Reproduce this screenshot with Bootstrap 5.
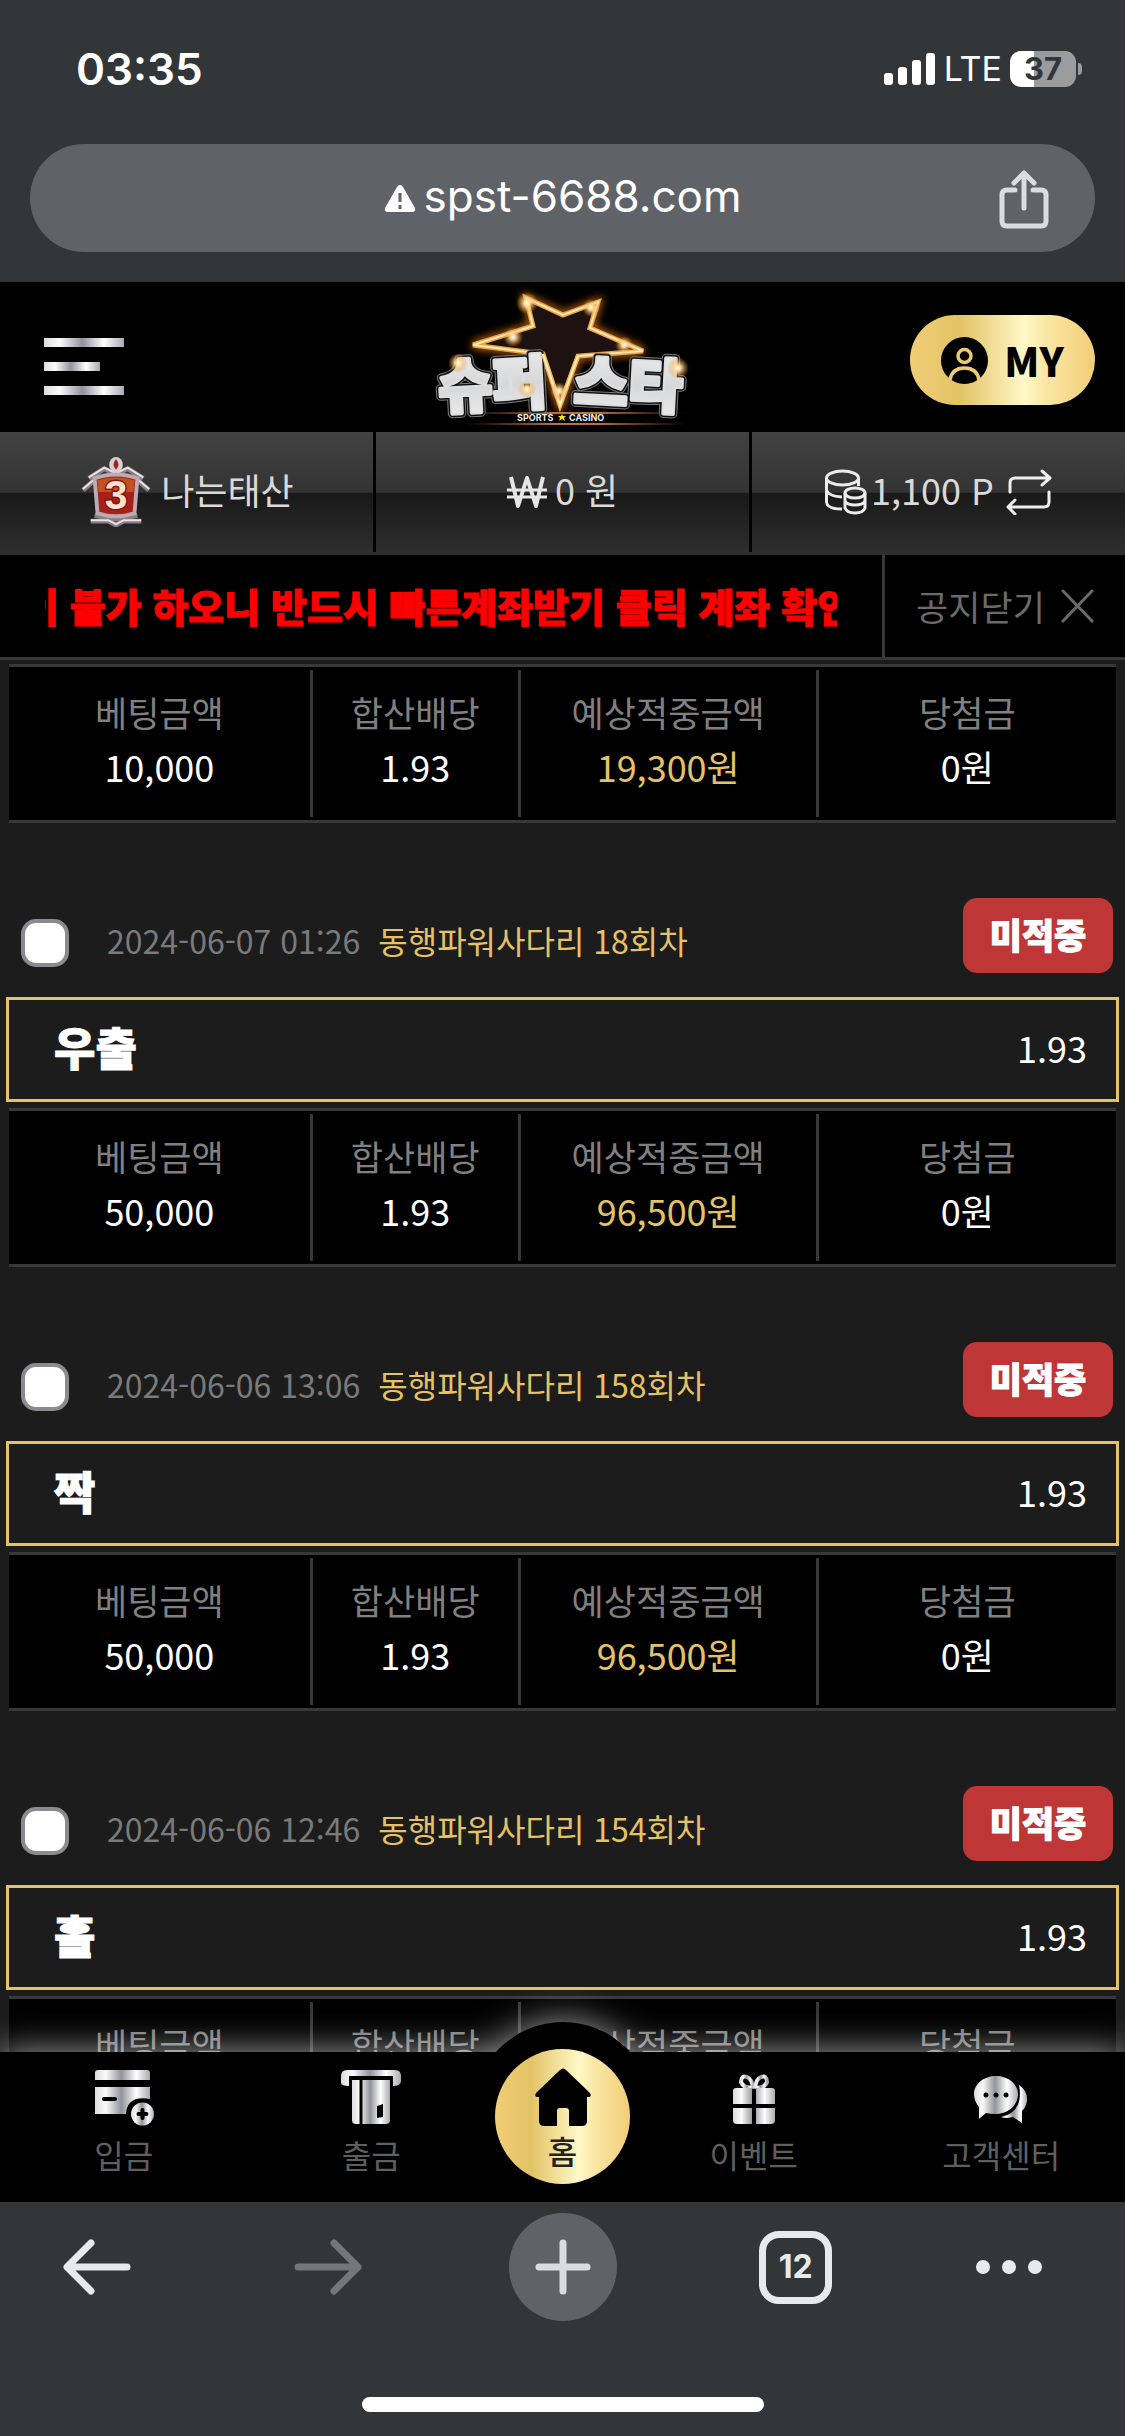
<!DOCTYPE html>
<html lang="ko">
<head>
<meta charset="utf-8">
<meta name="viewport" content="width=device-width, initial-scale=1">
<title>슈퍼스타</title>
<link href="https://cdn.jsdelivr.net/npm/bootstrap@5.3.0/dist/css/bootstrap.min.css" rel="stylesheet">
<script src="https://cdn.jsdelivr.net/npm/bootstrap@5.3.0/dist/js/bootstrap.bundle.min.js"></script>
<style>
:root{--gold:#e5c266;--line:#383838;--chrome:#333639;--chip:#5f6367;--goldfill:linear-gradient(90deg,#f1cd76 0%,#e3c366 27%,#fff8c8 62%,#fbe9a8 72%,#f1cd76 100%)}
body{background:#1c1c1c;color:#fff;font-family:"Noto Sans CJK KR","Noto Sans",sans-serif;font-size:36px;line-height:54px}
button{background:none;border:0;padding:0;color:inherit}
svg{display:block;flex:none}
.chrome{background:var(--chrome);font-family:Inter,"Liberation Sans",sans-serif}
.statusbar{height:138px;padding:0 43px 0 76px}
.clock{font-size:44px;font-weight:600}
.carrier{font-size:34px}
.battery{width:66px;height:36px;border-radius:11px;background:linear-gradient(90deg,#fff 37%,#9b9c9e 37%);color:var(--chrome);font-size:31px;font-weight:700;line-height:36px}
.nub{width:4px;height:12px;margin-left:2px;border-radius:0 6px 6px 0;background:#9b9c9e}
.urlbar{margin:6px 30px 30px;height:108px;border-radius:54px;background:var(--chip);font-size:44px}
.urlbar>span{padding-bottom:4px}
.sharebtn{right:46px;top:26px}
.sitehead{height:150px;background:#000;padding:6px 30px 0 44px}
.menubtn{margin-top:12px}
.mybtn{width:185px;height:90px;border-radius:45px;background:var(--goldfill);color:#000;font-size:40px;font-family:"Noto Sans CJK KR",sans-serif;font-weight:900}
.infobar{height:123px;background:linear-gradient(#424242 0,#333 49%,#191919 50%,#2f2f2f 100%);color:#dadada;padding-bottom:3px}
.infobar>div{flex:1 1 0}
.infobar>div+div{border-left:3px solid #000}
.infobar span{padding-bottom:6px}
.notice{height:105px;background:#000;border-bottom:3px solid var(--line);padding-bottom:3px}
.marquee{margin:0 45px;flex:1 1 0;color:red;font-size:39px;font-weight:900;-webkit-text-stroke:1px red}
.marquee span{display:block;margin-left:-22px}
.closebtn{width:243px;margin-bottom:-3px;border-left:3px solid var(--line);color:#6a6a6a;font-size:35px}
.betlist{padding:4px 6px 0}
.bethead{padding:75px 6px 24px 15px;font-size:32px}
.pickinfo{padding-top:14px}
.pickinfo input{appearance:none;width:48px;height:48px;border:4px solid #8a8a90;border-radius:15px;background:#fff;margin:0 38px 0 0;flex:none}
.pickinfo input:checked{background:var(--gold)}
.pickinfo span{padding-bottom:6px}
.when{color:#7a7a7a;margin-right:18px}
.goldtext{color:var(--gold)}
.result{width:150px;height:75px;border-radius:14px;background:#bf3636;font-size:35px;font-weight:900;-webkit-text-stroke:1px #fff;padding-bottom:4px}
.pickbox{height:105px;border:3px solid var(--gold);padding:0 29px 6px 45px;margin-bottom:6px}
.pickname{font-size:45px;font-weight:900;-webkit-text-stroke:1px #fff}
.betsum{margin:0 3px;background:#000;border:solid var(--line);border-width:3px 0;padding:3px 0}
.betsum table{table-layout:fixed;text-align:center}
.betsum th{font-weight:400;font-size:35px;color:#808080;padding:15px 0 0}
.betsum td{padding:0 0 24px}
.betsum tr>*:not(:last-child){border-right:3px solid var(--line)}
.c1{width:27.3%}.c2{width:18.8%}.c3{width:26.9%}
.sitenav{display:grid;grid-template-columns:1fr 1fr 135px 1fr 1fr;height:150px;z-index:1;font-size:32px}
.navback{position:absolute;inset:0;background:#000;filter:drop-shadow(0 0 18px rgba(255,255,255,.65));z-index:-1}
.navback::before{content:"";position:absolute;left:50%;top:-30px;width:180px;height:180px;margin-left:-90px;border-radius:50%;background:#000}
.sitenav a{color:#5f5f5f;text-decoration:none;line-height:38px;padding-top:13px}
.sitenav a.home{background:var(--goldfill);border-radius:50%;height:135px;margin-top:-3px;color:#222;font-weight:500;padding-top:12px;line-height:46px}
.toolbar{display:grid;grid-template-columns:1fr 1fr 1fr 1fr 1fr;padding:11px 0 0 1px;z-index:2}
.toolbar>button{height:108px}
.navback-arrow{margin-right:32px}
.navfwd-arrow{margin-right:20px}
.newtab{width:108px;height:108px;border-radius:54px;background:var(--chip)}
.tabs{width:73px;height:73px;border:7px solid #e6eaed;border-radius:20px;font-size:32px;font-weight:700;color:#e6eaed}
.homebar{height:15px;width:402px;border-radius:8px;background:#fff;margin:76px auto 24px}
</style>
</head>
<body class="d-flex flex-column vh-100 overflow-hidden">
<svg width="0" height="0" class="position-absolute" aria-hidden="true"><defs>
<linearGradient id="sv"><stop offset="0" stop-color="#dcdddc"/><stop offset=".2" stop-color="#fafafa"/><stop offset=".48" stop-color="#92939b"/><stop offset=".75" stop-color="#fff"/><stop offset="1" stop-color="#a9aab0"/></linearGradient>
</defs></svg>

<header class="chrome flex-shrink-0">
  <div class="statusbar d-flex align-items-center justify-content-between">
    <span class="clock">03:35</span>
    <div class="d-flex align-items-center">
      <svg width="52" height="32" viewBox="0 0 52 32" fill="#fff"><rect y="20" width="9" height="12" rx="3"/><rect x="14" y="14" width="9" height="18" rx="3"/><rect x="28" y="7" width="9" height="25" rx="3"/><rect x="42" width="9" height="32" rx="3"/></svg>
      <span class="carrier ms-2">LTE</span>
      <span class="battery text-center ms-2">37</span><span class="nub"></span>
    </div>
  </div>
  <div class="urlbar position-relative d-flex align-items-center justify-content-center">
    <svg class="me-2" width="32" height="29" viewBox="0 0 32 29"><path d="M16 1Q18 1 19 3L31 24Q32 28 28 28H4Q0 28 1 24L13 3Q14 1 16 1Z" fill="#fff"/><path d="M16 9v9M16 21v4" stroke="#5f6367" stroke-width="3"/></svg>
    <span>spst-6688.com</span>
    <button class="sharebtn position-absolute" aria-label="공유"><svg width="50" height="60" viewBox="0 0 50 60" fill="none" stroke="#d9dce1" stroke-width="5" stroke-linecap="round" stroke-linejoin="round"><path d="M16 20H8Q3 20 3 25V51Q3 56 8 56H42Q47 56 47 51V25Q47 20 42 20H34"/><path d="M25 38V4M15 13L25 3L35 13"/></svg></button>
  </div>
</header>

<div class="sitehead flex-shrink-0 d-flex align-items-center position-relative">
  <button class="menubtn" aria-label="메뉴"><svg width="80" height="57" viewBox="0 0 80 57" fill="url(#sv)"><path d="M0 0H80V9H0Z"/><path d="M0 24H56V33H0Z"/><path d="M0 48H80V57H0Z"/></svg></button>
  <a href="#" class="position-absolute top-0 start-50 translate-middle-x" aria-label="슈퍼스타">
  <svg width="280" height="150" viewBox="2 2 280 150">
    <defs><filter id="glow" x="-20%" y="-20%" width="140%" height="140%"><feGaussianBlur stdDeviation="4"/></filter>
    <radialGradient id="spark"><stop offset="0" stop-color="#fff"/><stop offset=".3" stop-color="#ffdf9c" stop-opacity=".9"/><stop offset="1" stop-color="#f08a20" stop-opacity="0"/></radialGradient>
    <linearGradient id="steel" x2="0" y2="1"><stop offset="0" stop-color="#f2f2f2"/><stop offset=".55" stop-color="#d6d7d9"/><stop offset="1" stop-color="#f0f0f0"/></linearGradient>
    <linearGradient id="bar"><stop offset="0" stop-color="#a3602a" stop-opacity="0"/><stop offset=".4" stop-color="#b8763a"/><stop offset=".6" stop-color="#b8763a"/><stop offset="1" stop-color="#a3602a" stop-opacity="0"/></linearGradient>
    <path id="star" d="M105 18L142 35L177 22L169 48L222 71L157 76L139 125L122 74L52 65L112 46Z"/></defs>
    <use href="#star" fill="none" stroke="#c96a14" stroke-width="7" filter="url(#glow)"/>
    <use href="#star" fill="#1d1211" stroke="#e9a548" stroke-width="5"/>
    <use href="#star" fill="none" stroke="#ffe9b0" stroke-width="2"/>
    <path d="M45 132H265V134H45ZM45 143H265V145H45Z" fill="url(#bar)"/>
    <g font-family="Noto Sans CJK KR,sans-serif" font-size="59" font-weight="900" paint-order="stroke" stroke-linejoin="round">
      <g fill="#777" stroke="#777" stroke-width="9"><text x="17" y="126" transform="rotate(-3 72 104)">슈퍼</text><text x="153" y="126" transform="rotate(3 208 104)">스타</text></g>
      <g fill="url(#steel)" stroke="#111" stroke-width="7"><text x="17" y="126" transform="rotate(-3 72 104)">슈퍼</text><text x="153" y="126" transform="rotate(3 208 104)">스타</text></g>
      <g fill="url(#steel)" stroke="#dedede" stroke-width="4"><text x="17" y="126" transform="rotate(-3 72 104)">슈퍼</text><text x="153" y="126" transform="rotate(3 208 104)">스타</text></g>
    </g>
    <path d="M122 74L139 125L157 76" fill="none" stroke="#f2b65c" stroke-width="4"/><path d="M122 74L139 125L157 76" fill="none" stroke="#fff0be" stroke-width="2"/>
    <g fill="url(#spark)"><circle cx="106" cy="23" r="11"/><circle cx="170" cy="28" r="9"/><circle cx="92" cy="57" r="10"/><circle cx="203" cy="65" r="9"/><circle cx="37" cy="83" r="10"/><circle cx="257" cy="88" r="11"/><circle cx="106" cy="109" r="9"/><circle cx="138" cy="111" r="9"/></g>
    <g font-family="Inter,sans-serif" font-size="9" font-weight="700" fill="#eee"><text x="96" y="141">SPORTS</text><text x="148" y="141">CASINO</text></g>
    <path d="M141 134l1 2h3l-2 2l1 3l-3-2l-3 2l1-3l-2-2h3Z" fill="#f4df12"/>
  </svg></a>
  <button class="mybtn ms-auto d-flex align-items-center justify-content-center gap-3"><svg width="47" height="47" viewBox="0 0 47 47"><circle cx="23.500" cy="23.500" r="23.500" fill="#000"/><g fill="none" stroke="#e9cc73" stroke-width="3.500"><circle cx="23.500" cy="19" r="6.500"/><path d="M9 43Q11 31 23.500 31Q36 31 38 43"/></g></svg>MY</button>
</div>

<div class="infobar flex-shrink-0 d-flex">
  <div class="d-flex align-items-center justify-content-center gap-2">
    <svg width="74" height="70" viewBox="0 0 76 72">
      <g fill="none" stroke="#8b7e85" stroke-width="5" stroke-linejoin="round"><path d="M10 22L26 12L38 18L50 12L66 22M4 34L18 22M72 34L58 22M16 60L38 64L60 60M12 66H30L38 70L46 66H64"/></g>
      <g fill="none" stroke="#eae3e6" stroke-width="2"><path d="M10 21L26 11L38 17L50 11L66 21M4 33L18 21M72 33L58 21M12 65H30L38 69L46 65H64"/></g>
      <path d="M16 22Q38 14 60 22L57 58Q38 64 19 58Z" fill="#a8201a" stroke="#b9adb3" stroke-width="4"/><path d="M19 24Q38 18 57 24L56 36H20Z" fill="#c2511f"/>
      <ellipse cx="38" cy="8" rx="7" ry="8" fill="#d8cfd3"/><path d="M38 2Q43 8 38 13Q33 8 38 2Z" fill="#a8201a"/>
      <text x="38" y="53" text-anchor="middle" font-family="Liberation Sans,sans-serif" font-weight="700" font-size="42" fill="#ffe0cc" stroke="#7c1710" stroke-width="3" paint-order="stroke">3</text></svg>
    <span>나는태산</span>
  </div>
  <div class="d-flex align-items-center justify-content-center gap-2">
    <svg width="40" height="32" viewBox="0 0 40 32" fill="none" stroke="#e6e6e6"><path d="M4 1L11 30L20 2L29 30L36 1" stroke-width="4" stroke-linejoin="round"/><path d="M0 14H40M0 21H40" stroke-width="3"/></svg>
    <span>0 원</span>
  </div>
  <div class="d-flex align-items-center justify-content-center gap-1">
    <svg width="42" height="46" viewBox="0 0 42 46" fill="none" stroke="#ececec" stroke-width="3"><ellipse cx="17.500" cy="9" rx="16" ry="7"/><path d="M1.500 9V33Q2 40 17 40M33.500 9V17M1.500 21Q3 27 17 28"/><ellipse cx="30" cy="24" rx="10" ry="5"/><path d="M20 24V39Q22 44 30 44Q38 44 40 39V24M20 32Q22 36 30 36Q38 36 40 32"/></svg>
    <span>1,100 P</span>
    <button aria-label="포인트 전환"><svg class="ms-2" width="46" height="46" viewBox="0 0 46 46" fill="none" stroke="#efefef" stroke-width="3" stroke-linecap="round" stroke-linejoin="round"><path d="M4 23V14Q4 9 9 9H43M36 2L44 9L36 16"/><path d="M43 23V33Q43 38 38 38H3M9 31L2 38L9 45"/></svg></button>
  </div>
</div>

<div class="notice flex-shrink-0 d-flex align-items-stretch">
  <div class="marquee d-flex align-items-center overflow-hidden text-nowrap"><span>이 불가 하오니 반드시 빠른계좌받기 클릭 계좌 확인</span></div>
  <button class="closebtn d-flex align-items-center justify-content-center gap-3">공지닫기<svg width="33" height="34" viewBox="0 0 33 34" stroke="#6a6a6a" stroke-width="3" stroke-linecap="round"><path d="M2 2L31 32M31 2L2 32"/></svg></button>
</div>

<main class="betlist flex-grow-1 overflow-hidden">
  <div class="betsum"><table class="w-100"><thead><tr><th class="c1">베팅금액</th><th class="c2">합산배당</th><th class="c3">예상적중금액</th><th>당첨금</th></tr></thead><tbody><tr><td>10,000</td><td>1.93</td><td class="goldtext">19,300원</td><td>0원</td></tr></tbody></table></div>

  <div class="bethead d-flex align-items-center justify-content-between">
    <label class="pickinfo d-flex align-items-center"><input type="checkbox"><span class="when">2024-06-07 01:26</span><span class="goldtext">동행파워사다리 18회차</span></label>
    <span class="result d-flex align-items-center justify-content-center">미적중</span>
  </div>
  <div class="pickbox d-flex align-items-center justify-content-between"><span class="pickname">우출</span><span>1.93</span></div>
  <div class="betsum"><table class="w-100"><thead><tr><th class="c1">베팅금액</th><th class="c2">합산배당</th><th class="c3">예상적중금액</th><th>당첨금</th></tr></thead><tbody><tr><td>50,000</td><td>1.93</td><td class="goldtext">96,500원</td><td>0원</td></tr></tbody></table></div>

  <div class="bethead d-flex align-items-center justify-content-between">
    <label class="pickinfo d-flex align-items-center"><input type="checkbox"><span class="when">2024-06-06 13:06</span><span class="goldtext">동행파워사다리 158회차</span></label>
    <span class="result d-flex align-items-center justify-content-center">미적중</span>
  </div>
  <div class="pickbox d-flex align-items-center justify-content-between"><span class="pickname">짝</span><span>1.93</span></div>
  <div class="betsum"><table class="w-100"><thead><tr><th class="c1">베팅금액</th><th class="c2">합산배당</th><th class="c3">예상적중금액</th><th>당첨금</th></tr></thead><tbody><tr><td>50,000</td><td>1.93</td><td class="goldtext">96,500원</td><td>0원</td></tr></tbody></table></div>

  <div class="bethead d-flex align-items-center justify-content-between">
    <label class="pickinfo d-flex align-items-center"><input type="checkbox"><span class="when">2024-06-06 12:46</span><span class="goldtext">동행파워사다리 154회차</span></label>
    <span class="result d-flex align-items-center justify-content-center">미적중</span>
  </div>
  <div class="pickbox d-flex align-items-center justify-content-between"><span class="pickname">홀</span><span>1.93</span></div>
  <div class="betsum"><table class="w-100"><thead><tr><th class="c1">베팅금액</th><th class="c2">합산배당</th><th class="c3">예상적중금액</th><th>당첨금</th></tr></thead></table></div>
</main>

<nav class="sitenav position-relative flex-shrink-0">
  <div class="navback"></div>
  <a href="#" class="d-flex flex-column align-items-center"><svg width="70" height="70" viewBox="0 0 70 70"><path d="M6 8Q6 5 9 5H58Q61 5 61 8V15H6ZM6 22H61V34Q38 30 37 49H6Z" fill="url(#sv)"/><path d="M15 34H26" stroke="#000" stroke-width="4" stroke-linecap="round"/><circle cx="53.500" cy="49" r="11.500" fill="url(#sv)"/><path d="M53.500 45v8M49.500 49h8" stroke="#000" stroke-width="4" stroke-linecap="round"/></svg>입금</a>
  <a href="#" class="d-flex flex-column align-items-center"><svg width="70" height="70" viewBox="0 0 70 70"><path d="M5 18V11Q5 5 11 5H59Q65 5 65 11V16Q65 21 57 21V11H13V21Q5 21 5 18Z" fill="url(#sv)"/><path d="M16 15H54V55Q54 59 50 59H20Q16 59 16 55Z" fill="url(#sv)"/><path d="M25 14V59" stroke="#000" stroke-width="3"/><path d="M41 41L47 39V52L41 53Z" fill="#000"/></svg>출금</a>
  <a href="#" class="home d-flex flex-column align-items-center"><svg width="60" height="66" viewBox="0 0 60 66"><path d="M27 9Q30 6 33 9L57 32Q59 35 56 36H54V60Q54 65 49 65H36V50Q36 47 33 47H27Q24 47 24 50V65H11Q6 65 6 60V36H4Q1 35 3 32Z" fill="#000"/></svg>홈</a>
  <a href="#" class="d-flex flex-column align-items-center"><svg width="70" height="70" viewBox="0 0 70 70"><g fill="none" stroke="url(#sv)" stroke-width="4"><path d="M34 23Q24 23 22 17Q22 10 28 12Q33 14 34 23Z"/><path d="M36 23Q46 23 48 17Q48 10 42 12Q37 14 36 23Z"/></g><path d="M14 26Q14 23 17 23H53Q56 23 56 26V55Q56 59 52 59H18Q14 59 14 55Z" fill="url(#sv)"/><path d="M35 24V60M14 41H56" stroke="#000" stroke-width="4"/></svg>이벤트</a>
  <a href="#" class="d-flex flex-column align-items-center"><svg width="70" height="70" viewBox="0 0 70 70"><path d="M53 20Q62 26 61 36Q60 42 56 46V58L47 52Q40 54 35 52Q58 47 53 20Z" fill="url(#sv)"/><path d="M30 11C42 11 52 19 52 29C52 40 42 49 30 49Q24 49 20 48L13 54V42Q8 36 8 29C8 19 18 11 30 11Z" fill="url(#sv)"/><g fill="#000"><circle cx="20" cy="30" r="2.500"/><circle cx="30" cy="30" r="2.500"/><circle cx="40" cy="30" r="2.500"/></g></svg>고객센터</a>
</nav>

<footer class="chrome flex-shrink-0 position-relative z-2">
  <div class="toolbar align-items-center">
    <button class="d-flex align-items-center justify-content-center" aria-label="뒤로"><svg class="navback-arrow" width="68" height="56" viewBox="0 0 68 56" fill="none" stroke="#e6eaed" stroke-width="7" stroke-linecap="round" stroke-linejoin="round"><path d="M64 28H5M28 4L4 28L28 52"/></svg></button>
    <button class="d-flex align-items-center justify-content-center" aria-label="앞으로"><svg class="navfwd-arrow" width="68" height="56" viewBox="0 0 68 56" fill="none" stroke="#747679" stroke-width="7" stroke-linecap="round" stroke-linejoin="round"><path d="M4 28H63M40 4L64 28L40 52"/></svg></button>
    <button class="newtab mx-auto d-flex align-items-center justify-content-center" aria-label="새 탭"><svg width="56" height="56" viewBox="0 0 56 56" stroke="#dadce0" stroke-width="7" stroke-linecap="round"><path d="M28 4V52M4 28H52"/></svg></button>
    <button class="d-flex align-items-center justify-content-center" aria-label="탭 목록"><span class="tabs ms-3 d-flex align-items-center justify-content-center">12</span></button>
    <button class="d-flex align-items-center justify-content-center" aria-label="더보기"><svg class="me-2" width="68" height="16" viewBox="0 0 68 16" fill="#e6eaed"><circle cx="8" cy="8" r="7"/><circle cx="34" cy="8" r="7"/><circle cx="60" cy="8" r="7"/></svg></button>
  </div>
  <div class="d-flex"><div class="homebar"></div></div>
</footer>
</body>
</html>
